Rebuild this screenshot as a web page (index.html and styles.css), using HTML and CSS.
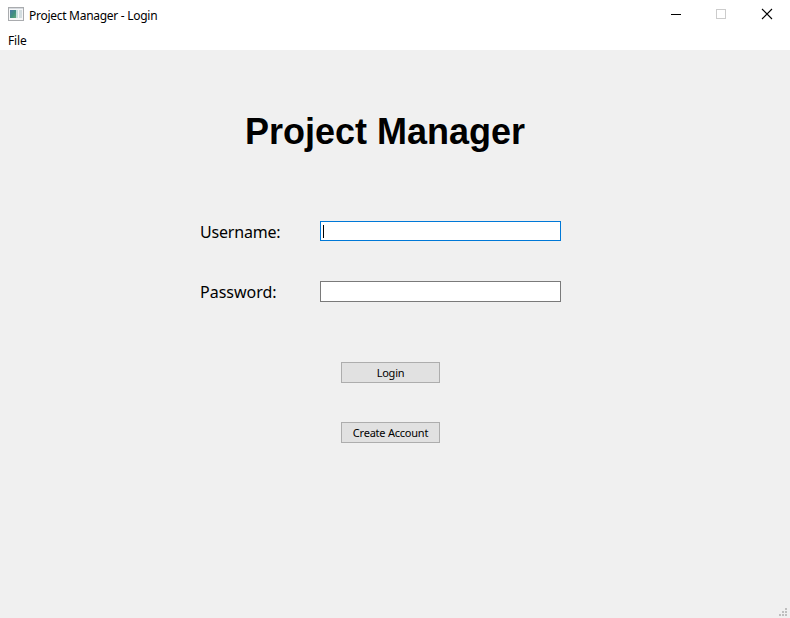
FILE: index.html
```html
<!DOCTYPE html>
<html lang="en">
<head>
<meta charset="utf-8">
<title>Project Manager - Login</title>
<link rel="stylesheet" href="styles.css">
</head>
<body>
<div class="window">
  <header class="titlebar">
    <svg class="app-icon" width="16" height="14" viewBox="0 0 16 14" shape-rendering="crispEdges">
      <defs>
        <linearGradient id="pane" x1="0" y1="0" x2="1" y2="1">
          <stop offset="0" stop-color="#4a77a8"/>
          <stop offset="0.55" stop-color="#3f8f80"/>
          <stop offset="1" stop-color="#62a878"/>
        </linearGradient>
      </defs>
      <rect x="0.5" y="0.5" width="15" height="13" fill="#f6f7f8" stroke="#a9abae"/>
      <rect x="1" y="1" width="14" height="1" fill="#d6dadf"/>
      <rect x="2" y="3" width="6" height="8" fill="url(#pane)"/>
      <rect x="8" y="3" width="2" height="8" fill="#c3dedd"/>
      <rect x="11" y="3" width="3" height="8" fill="#d3dde0"/>
    </svg>
    <span class="title">Project Manager - Login</span>
    <div class="controls">
      <svg class="control" viewBox="0 0 46 29"><path d="M19 14.5H29" stroke="#000"/></svg>
      <svg class="control" viewBox="0 0 46 29"><rect x="18.5" y="9.5" width="9" height="9" fill="none" stroke="#ccc"/></svg>
      <svg class="control" viewBox="0 0 46 29"><path d="M18 9L28 19M28 9L18 19" stroke="#000" stroke-width="1.1"/></svg>
    </div>
  </header>
  <nav class="menubar"><span class="menu">File</span></nav>
  <main class="content">
    <h1 class="heading">Project Manager</h1>
    <form class="form">
      <label class="label username" for="user">Username:</label>
      <div class="field focused" id="user"><span class="caret"></span></div>
      <label class="label" for="pass">Password:</label>
      <div class="field" id="pass"></div>
    </form>
    <div class="actions">
      <button class="button">Login</button>
      <button class="button">Create Account</button>
    </div>
    <svg class="grip" width="8" height="8" viewBox="0 0 8 8" fill="#bfbfbf" shape-rendering="crispEdges">
      <path d="M6 0h2v2H6zM3 3h2v2H3zM6 3h2v2H6zM0 6h2v2H0zM3 6h2v2H3zM6 6h2v2H6z"/>
    </svg>
  </main>
</div>
</body>
</html>
```
FILE: styles.css
```css
* { box-sizing: border-box; }
body { margin: 0; background: #f0f0f0; color: #000; font-family: "Noto Sans", sans-serif; }
.window { width: 790px; height: 618px; display: flex; flex-direction: column; overflow: hidden; }
.titlebar { height: 29px; background: #fff; display: flex; align-items: center; padding-left: 8px; flex: none; }
.app-icon { margin: 0 5px 1px 0; }
.title { font-size: 12px; letter-spacing: -0.28px; white-space: nowrap; padding-top: 1px; }
.controls { margin-left: auto; display: flex; }
.control { width: 46px; height: 29px; }
.menubar { height: 21px; flex: none; background: #fff; padding-left: 8px; font-size: 12px; letter-spacing: -0.15px; line-height: 23px; }
.content { flex: 1; background: #f0f0f0; position: relative; padding-top: 61px; display: flex; flex-direction: column; }
.heading { margin: 0 0 0 245px; font: bold 36px/41px "Liberation Sans", sans-serif; white-space: nowrap; }
.form { display: grid; grid-template-columns: 120px 241px; grid-template-rows: 21px 21px; row-gap: 39px; margin: 69px 0 0 200px; }
.label { font-size: 16px; line-height: 23px; white-space: nowrap; }
.username { letter-spacing: -0.2px; }
.field { width: 241px; height: 21px; background: #fff; border: 1px solid #7a7a7a; padding: 3px 2px; }
.focused { height: 20px; border-color: #0078d7; }
.caret { display: block; width: 1px; height: 13px; background: #000; }
.actions { display: flex; flex-direction: column; gap: 39px; margin: 60px 0 0 341px; }
.button { width: 99px; height: 21px; padding: 0; border: 1px solid #adadad; background: #e1e1e1; color: #000; font: 11px/19px "Noto Sans", sans-serif; letter-spacing: -0.23px; white-space: nowrap; }
.grip { position: absolute; right: 3px; bottom: 2px; }
```
